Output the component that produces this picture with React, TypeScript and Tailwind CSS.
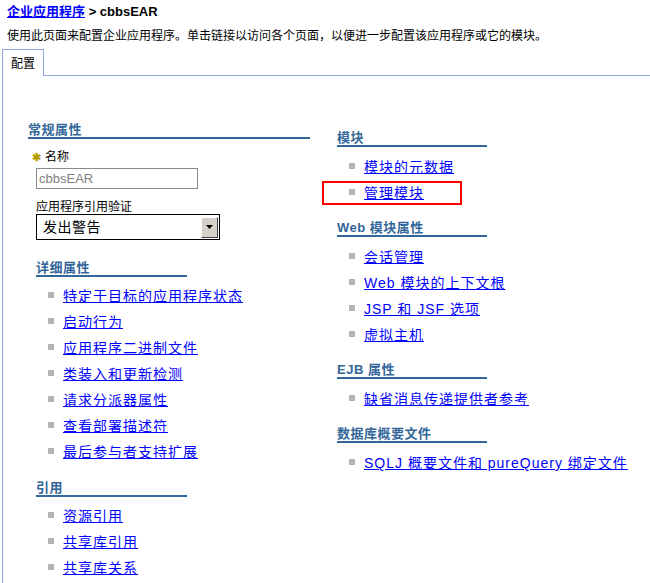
const font = 'font-["Liberation_Sans","Noto_Sans_CJK_SC",sans-serif]';

function Heading({ title, barWidth }: { title: string; barWidth: string }) {
  return (
    <div>
      <div className="text-[13px] leading-[14px] font-bold text-[#336699] tracking-[0.5px]">{title}</div>
      <div className={`h-[2px] bg-[#336699] ${barWidth}`} />
    </div>
  );
}

function LinkItem({ label, boxed }: { label: string; boxed?: boolean }) {
  return (
    <div className="relative flex items-center h-[26px] pl-[12px]">
      <span className="w-[6px] h-[6px] bg-[#b4b4b4] mr-[9px] mb-[2px]" />
      <a href="#" className="text-[14px] leading-[16px] text-[#0000ff] underline tracking-[1px]">
        {label}
      </a>
      {boxed && (
        <div className="absolute left-[-15px] top-[1px] w-[140px] h-[24px] border-2 border-[#ff0000]" />
      )}
    </div>
  );
}

function Section({
  title,
  barWidth,
  items,
  boxed,
  className,
  gap = 'mt-[7px]',
}: {
  title: string;
  barWidth: string;
  items: string[];
  boxed?: string;
  className?: string;
  gap?: string;
}) {
  return (
    <div className={className}>
      <Heading title={title} barWidth={barWidth} />
      <div className={gap}>
        {items.map((it) => (
          <LinkItem key={it} label={it} boxed={it === boxed} />
        ))}
      </div>
    </div>
  );
}

export default function App() {
  return (
    <div className={`w-[650px] h-[583px] overflow-hidden bg-white text-black ${font}`}>
      <div className="pl-[7px] pt-[4px] text-[13px] leading-[16px] font-bold">
        <a href="#" className="text-[#0000ff] underline">企业应用程序</a>
        <span> &gt; cbbsEAR</span>
      </div>
      <div className="pl-[7px] mt-[8px] text-[12px] leading-[16px]">
        使用此页面来配置企业应用程序。单击链接以访问各个页面，以便进一步配置该应用程序或它的模块。
      </div>
      <div className="ml-[2px] mt-[5px] border-l border-[#8ea5dd] h-[600px]">
        <div className="flex h-[27px]">
          <div className="w-[41px] border-t border-r border-[#8ea5dd] pl-[8px] pt-[6px] text-[12px] leading-[16px]">
            配置
          </div>
          <div className="flex-1 border-b border-[#8ea5dd]" />
        </div>
        <div className="grid grid-cols-[309px_1fr] pl-[25px]">
          <div className="pt-[47px]">
            <Heading title="常规属性" barWidth="w-[282px]" />
            <div className="pl-[8px]">
              <div className="mt-[11px] flex items-center text-[12px] leading-[14px]">
                <span className="text-[#b39b00] font-bold text-[11px] w-[10px] -ml-[4px] mr-[3px]">✱</span>
                <span>名称</span>
              </div>
              <div className="mt-[4px] w-[162px] h-[21px] border border-[#8a8a8a] flex items-center pl-[2px] text-[13px] text-[#808080]">
                cbbsEAR
              </div>
              <div className="mt-[11px] text-[12px] leading-[14px]">应用程序引用验证</div>
              <div className="w-[184px] h-[26px] border border-black flex items-center justify-between pl-[6px] pr-[1px]">
                <span className="text-[14px] tracking-[0.5px]">发出警告</span>
                <div className="w-[17px] h-[21px] bg-[#d4d0c8] border-t border-l border-t-white border-l-white border-b border-r border-b-[#404040] border-r-[#404040] flex items-center justify-center">
                  <svg width="7" height="4" viewBox="0 0 7 4"><path d="M0 0h7L3.5 4z" fill="#000" /></svg>
                </div>
              </div>
              <Section
                className="mt-[21px]"
                gap="mt-[6px]"
                title="详细属性"
                barWidth="w-[151px]"
                items={["特定于目标的应用程序状态", "启动行为", "应用程序二进制文件", "类装入和更新检测", "请求分派器属性", "查看部署描述符", "最后参与者支持扩展"]}
              />
              <Section className="mt-[16px]" gap="mt-[6px]" title="引用" barWidth="w-[151px]" items={["资源引用", "共享库引用", "共享库关系"]} />
            </div>
          </div>
          <div className="pt-[55px]">
            <Section title="模块" barWidth="w-[150px]" items={["模块的元数据", "管理模块"]} boxed="管理模块" />
            <Section className="mt-[15px]" title="Web 模块属性" barWidth="w-[150px]" items={["会话管理", "Web 模块的上下文根", "JSP 和 JSF 选项", "虚拟主机"]} />
            <Section className="mt-[15px]" title="EJB 属性" barWidth="w-[150px]" items={["缺省消息传递提供者参考"]} />
            <Section className="mt-[15px]" title="数据库概要文件" barWidth="w-[150px]" items={["SQLJ 概要文件和 pureQuery 绑定文件"]} />
          </div>
        </div>
      </div>
    </div>
  );
}
